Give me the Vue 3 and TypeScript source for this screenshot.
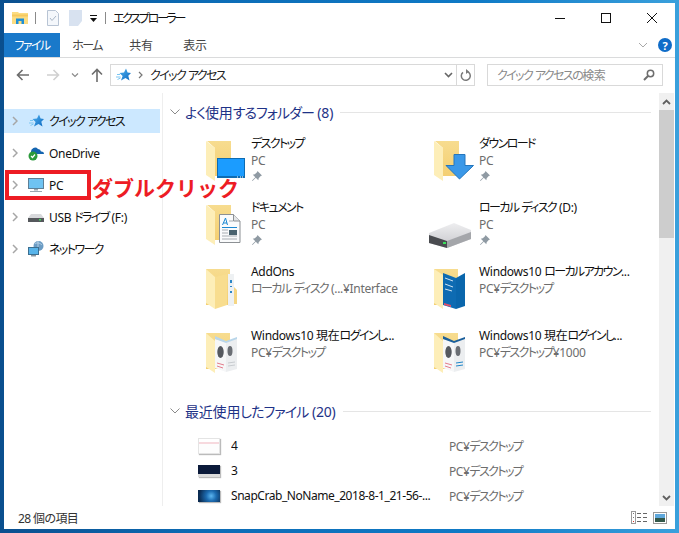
<script setup lang="ts">
import { h } from 'vue'
import type { FunctionalComponent } from 'vue'

type TileKind = 'desktop' | 'download' | 'docs' | 'drive' | 'addons' | 'blue' | 'paper' | 'paperblue'

interface Tile {
  name: string
  sub: string
  kind: TileKind
  pinned?: boolean
}

const tiles: Tile[] = [
  { name: 'デスクトップ', sub: 'PC', kind: 'desktop', pinned: true },
  { name: 'ダウンロード', sub: 'PC', kind: 'download', pinned: true },
  { name: 'ドキュメント', sub: 'PC', kind: 'docs', pinned: true },
  { name: 'ローカル ディスク (D:)', sub: 'PC', kind: 'drive', pinned: true },
  { name: 'AddOns', sub: 'ローカル ディスク (...¥Interface', kind: 'addons' },
  { name: 'Windows10 ローカルアカウン...', sub: 'PC¥デスクトップ', kind: 'blue' },
  { name: 'Windows10 現在ログインし...', sub: 'PC¥デスクトップ', kind: 'paper' },
  { name: 'Windows10 現在ログインし...', sub: 'PC¥デスクトップ¥1000', kind: 'paperblue' },
]

const recent = [
  { name: '4', kind: 'light' },
  { name: '3', kind: 'dark' },
  { name: 'SnapCrab_NoName_2018-8-1_21-56-...', kind: 'win' },
]

const tabs = ['ホーム', '共有', '表示']

// kana runs get tighter tracking than latin and kanji, like the Windows UI font
const KanaText: FunctionalComponent<{ text: string }> = (props) =>
  props.text
    .split(/([\u3040-\u30ff]+)/)
    .filter(Boolean)
    .map((part) => h('span', { class: /^[\u3040-\u30ff]/.test(part) ? 'kana' : undefined }, part))
KanaText.props = ['text']
</script>

<template>
  <div class="desktop">
    <svg class="defs" aria-hidden="true">
      <defs>
        <linearGradient id="fback" x1="0" y1="0" x2="0" y2="1">
          <stop offset="0" stop-color="#f7dc8f" />
          <stop offset="1" stop-color="#f4cf72" />
        </linearGradient>
        <linearGradient id="starfill" x1="0" y1="0" x2="1" y2="1">
          <stop offset="0" stop-color="#4fb2f0" />
          <stop offset="1" stop-color="#0c68c0" />
        </linearGradient>
        <linearGradient id="drive" x1="0" y1="0" x2="0" y2="1">
          <stop offset="0" stop-color="#eeeef0" />
          <stop offset="1" stop-color="#c6c7cb" />
        </linearGradient>
      </defs>
      <symbol id="star" viewBox="0 0 16 16">
        <path d="M11 1.500l1.600 4.100 3.400.4-2.700 2.800 1.200 4.700-4-2.500L6 13.500l1.600-4.500L4.500 6l4.500-.4z" fill="url(#starfill)" />
        <path d="M2 7.500h3M1 10h4.500M2.500 12.500l3-1.500" stroke="#7cc6f2" stroke-width="1" fill="none" />
      </symbol>
      <symbol id="pin" viewBox="0 0 12 12">
        <path d="M6.500 1l4.500 4.500-1.300.5-2 2.200-.4 2L4.800 7.700 1.500 11 1 10.500 4.300 7.200 1.800 4.700l2-.4L6 2.300z" fill="#8f9aa3" />
      </symbol>
      <symbol id="folder" viewBox="0 0 51 60">
        <path d="M7 6h24v35H15V13z" fill="url(#fback)" />
        <path d="M6 6l9 7v33l-9-6z" fill="#fdeeb8" />
      </symbol>
    </svg>

    <div class="window">
      <header class="titlebar">
        <svg class="app-icon" width="16" height="14" viewBox="0 0 16 14">
          <path d="M0 1h6l1 1h9v11H0z" fill="#fbdc82" />
          <path d="M0 3.500h16v2H0z" fill="#f5c95e" />
          <path d="M4 7.500h8V13H9.500v-3h-3v3H4z" fill="#1f8fd6" />
        </svg>
        <span class="qa-sep" />
        <svg class="qa-icon" width="12" height="16" viewBox="0 0 12 16">
          <path d="M.500.500h8l3 3v12H.500z" fill="#f4f7fb" stroke="#b8c4d4" />
          <path d="M3 8l2 2.500L9 6" fill="none" stroke="#a9b6c6" stroke-width="1" />
        </svg>
        <svg class="qa-icon" width="13" height="16" viewBox="0 0 13 16">
          <path d="M0 0h13v11l-4 5H0z" fill="#d8e2f0" />
        </svg>
        <svg class="qa-drop" width="7" height="7" viewBox="0 0 7 7">
          <path d="M0 0h7v1H0zM0 3h7L3.500 7z" fill="#111" />
        </svg>
        <span class="qa-sep second" />
        <span class="title">エクスプローラー</span>
        <div class="winbtns">
          <svg width="12" height="12" viewBox="0 0 12 12"><path d="M1 6.500h10" stroke="#111" /></svg>
          <svg width="12" height="12" viewBox="0 0 12 12"><rect x="1.500" y="1.500" width="9" height="9" fill="none" stroke="#111" /></svg>
          <svg width="12" height="12" viewBox="0 0 12 12"><path d="M1 1l10 10M11 1L1 11" stroke="#111" /></svg>
        </div>
      </header>

      <nav class="ribbon">
        <span class="tab active"><KanaText text="ファイル" /></span>
        <span v-for="tab in tabs" :key="tab" class="tab"><KanaText :text="tab" /></span>
        <svg class="ribbon-chev" width="10" height="6" viewBox="0 0 10 6">
          <path d="M1 1l4 4 4-4" fill="none" stroke="#a8a8a8" />
        </svg>
        <span class="help">?</span>
      </nav>

      <div class="addressrow">
        <svg class="nav-btn" width="14" height="12" viewBox="0 0 14 12">
          <path d="M13 6H2M6.500 1L1.500 6l5 5" fill="none" stroke="#6d6d6d" stroke-width="1.600" />
        </svg>
        <svg class="nav-btn fwd" width="14" height="12" viewBox="0 0 14 12">
          <path d="M1 6h11M7.500 1l5 5-5 5" fill="none" stroke="#d0d0d0" stroke-width="1.600" />
        </svg>
        <svg class="nav-btn drop" width="8" height="5" viewBox="0 0 8 5">
          <path d="M1 .5l3 3 3-3" fill="none" stroke="#8a8a8a" stroke-width="1.200" />
        </svg>
        <svg class="nav-btn up" width="12" height="14" viewBox="0 0 12 14">
          <path d="M6 14V2M1 6.500l5-5 5 5" fill="none" stroke="#6d6d6d" stroke-width="1.600" />
        </svg>
        <div class="addressbox">
          <svg class="addr-star" width="16" height="16"><use href="#star" /></svg>
          <svg class="addr-chev" width="5" height="8" viewBox="0 0 5 8">
            <path d="M1 1l3 3-3 3" fill="none" stroke="#777" stroke-width="1.200" />
          </svg>
          <span class="addr-text"><KanaText text="クイック アクセス" /></span>
          <svg class="addr-drop" width="9" height="6" viewBox="0 0 9 6">
            <path d="M1 1l3.500 3.500L8 1" fill="none" stroke="#666" stroke-width="1.600" />
          </svg>
          <span class="addr-refresh">
            <svg width="12" height="13" viewBox="0 0 12 13">
              <path d="M7 2.500A4.500 4.500 0 1 1 3 3.300" fill="none" stroke="#7a7a7a" stroke-width="1.500" />
              <path d="M6 0v5l3-2.500z" fill="#7a7a7a" />
            </svg>
          </span>
        </div>
        <div class="searchbox">
          <span><KanaText text="クイック アクセスの検索" /></span>
          <svg width="12" height="12" viewBox="0 0 12 12">
            <circle cx="7.500" cy="4.500" r="3.200" fill="none" stroke="#6d6d6d" stroke-width="1.500" />
            <path d="M5 7l-4 4" stroke="#6d6d6d" stroke-width="2" />
          </svg>
        </div>
      </div>

      <div class="body">
        <aside class="navpane">
          <div class="navrow selected">
            <svg class="navchev" width="6" height="10" viewBox="0 0 6 10"><path d="M1 1l4 4-4 4" fill="none" stroke="#a6a6a6" stroke-width="1.500" /></svg>
            <svg class="navicon" width="16" height="16"><use href="#star" /></svg>
            <span><KanaText text="クイック アクセス" /></span>
          </div>
          <div class="navrow">
            <svg class="navchev" width="6" height="10" viewBox="0 0 6 10"><path d="M1 1l4 4-4 4" fill="none" stroke="#a6a6a6" stroke-width="1.500" /></svg>
            <svg class="navicon" width="16" height="16" viewBox="0 0 16 16">
              <path d="M3 7a4 4 0 0 1 7-3 3 3 0 0 1 3 2.500 2.500 2.500 0 0 1 3 2.500H6z" fill="#1565b0" />
              <circle cx="5" cy="11" r="4.500" fill="#2c9a3c" />
              <path d="M3 11l1.500 1.500L7 9.500" fill="none" stroke="#fff" stroke-width="1.200" />
            </svg>
            <span>OneDrive</span>
          </div>
          <div class="navrow">
            <svg class="navchev" width="6" height="10" viewBox="0 0 6 10"><path d="M1 1l4 4-4 4" fill="none" stroke="#a6a6a6" stroke-width="1.500" /></svg>
            <svg class="navicon" width="16" height="16" viewBox="0 0 16 16">
              <rect x=".5" y="1.500" width="15" height="10" fill="#6fc3f2" stroke="#5d7f96" />
              <path d="M6 12h4v1.500H6zM2 14h12v1H2z" fill="#9aa7b0" />
            </svg>
            <span>PC</span>
          </div>
          <div class="navrow">
            <svg class="navchev" width="6" height="10" viewBox="0 0 6 10"><path d="M1 1l4 4-4 4" fill="none" stroke="#a6a6a6" stroke-width="1.500" /></svg>
            <svg class="navicon" width="16" height="16" viewBox="0 0 16 16">
              <path d="M3 5h10l3 4H0z" fill="#d8d9dc" />
              <path d="M0 9h16v4H0z" fill="#55585c" />
              <rect x="11" y="10" width="2" height="1.500" fill="#3fdc5a" />
            </svg>
            <span><KanaText text="USB ドライブ (F:)" /></span>
          </div>
          <div class="navrow">
            <svg class="navchev" width="6" height="10" viewBox="0 0 6 10"><path d="M1 1l4 4-4 4" fill="none" stroke="#a6a6a6" stroke-width="1.500" /></svg>
            <svg class="navicon" width="16" height="16" viewBox="0 0 16 16">
              <circle cx="10.500" cy="5" r="5" fill="#6b9cc4" />
              <path d="M7 3c2-2 5-1 7 1M10 0v10" stroke="#c7dcec" stroke-width=".8" fill="none" />
              <rect x=".5" y="6.500" width="10" height="7" fill="#58b4ea" stroke="#3c6f90" />
              <path d="M3 14h5v1.500H3z" fill="#8a98a3" />
            </svg>
            <span><KanaText text="ネットワーク" /></span>
          </div>
        </aside>

        <main class="content">
          <h2 class="group">
            <svg width="10" height="6" viewBox="0 0 10 6"><path d="M.5.500L5 5 9.500.5" fill="none" stroke="#8a8a8a" /></svg>
            <span><KanaText text="よく使用するフォルダー (8)" /></span>
            <i />
          </h2>

          <div class="tiles">
            <div v-for="tile in tiles" :key="tile.name + tile.sub" class="tile">
              <svg class="tile-icon" width="51" height="60" viewBox="0 0 51 60">
                <template v-if="tile.kind === 'drive'">
                  <path d="M1 34l25-10 17 7v9l-24 9-18-5z" fill="url(#drive)" />
                  <path d="M1 36l18 6v7l-18-5z" fill="#4a4c50" />
                  <path d="M19 42l24-9v7l-24 9z" fill="#a4a6aa" />
                  <rect x="15" y="43" width="3" height="2" fill="#3be05c" />
                </template>
                <template v-else-if="tile.kind === 'addons'">
                  <path d="M6 6h24v36H6z" fill="url(#fback)" />
                  <path d="M28 11h6v32h-6z" fill="#eef1f3" />
                  <path d="M30 17h2v3h-2zM30 23h2v1h-2zM30 28h2v2h-2z" fill="#2d87c7" />
                  <path d="M34 24l3 3v14h-3z" fill="#f5d684" />
                  <path d="M15 14l12-3v31l-12 4z" fill="#f8dd8f" />
                  <path d="M6 6l9 8v32l-9-6z" fill="#fdeeb8" />
                </template>
                <template v-else-if="tile.kind === 'blue'">
                  <path d="M6 6h24v36H6z" fill="url(#fback)" />
                  <path d="M6 6l9 6v34l-9-6z" fill="#fdeeb8" />
                  <path d="M15 10l13 5v31l-13-4z" fill="#0e6bb2" />
                  <path d="M28 15l9-5v33l-9 3z" fill="#0a66ac" />
                  <path d="M17 15l8 3M17 21l8 3M17 26l7 2" stroke="#cfe3f2" />
                  <path d="M16 40l7 2v2l-7-2z" fill="#e0506a" />
                </template>
                <template v-else-if="tile.kind === 'paper' || tile.kind === 'paperblue'">
                  <path d="M6 6h24v36H6z" fill="url(#fback)" />
                  <path d="M6 6l9 8v32l-9-6z" fill="#fdeeb8" />
                  <path d="M15 12l11 3v30l-11-4z" fill="#f6f7f8" />
                  <path d="M26 15l11-4v31l-11 3z" fill="#eceef0" />
                  <path d="M15 9l11 5 11-4v2l-11 4-11-4z" :fill="tile.kind === 'paper' ? '#b9d6ea' : '#1b5f9b'" />
                  <ellipse cx="20.500" cy="25" rx="3.200" ry="6" fill="#55595f" />
                  <ellipse cx="30" cy="24" rx="2.500" ry="5" fill="#6a6e74" />
                  <path d="M17 36l7 2M17 39l6 2" stroke="#e47b8b" />
                  <path d="M28 36l7-1M28 39l7-1" :stroke="tile.kind === 'paper' ? '#c8ccd0' : '#1f86c9'" />
                </template>
                <template v-else>
                  <use href="#folder" width="51" height="60" />
                  <template v-if="tile.kind === 'desktop'">
                    <rect x="17.500" y="23.500" width="27" height="19" fill="#1b9cff" stroke="#0d6cb3" />
                    <path d="M18 41h26v2H18z" fill="#0d6cb3" />
                    <path d="M37 41.500h1v1h-1zM40 41.500h1v1h-1zM42 41.500h1v1h-1z" fill="#fff" />
                  </template>
                  <path v-else-if="tile.kind === 'download'" d="M26 19.500h11v11h8.500L31.500 44 18 30.500h8z" fill="#3a98e8" stroke="#2476bd" />
                  <template v-else-if="tile.kind === 'docs'">
                    <path d="M19.500 15.500h14l6.500 6.500v21.500H19.500z" fill="#fafbfc" stroke="#8c9094" />
                    <path d="M33.500 15.500v6.500h6.500" fill="#e4e6e8" stroke="#8c9094" />
                    <path d="M22.500 26l3-7 2 7M23.500 24h3.500" fill="none" stroke="#1b87d1" />
                    <path d="M29 22h4" stroke="#a8adb2" />
                    <path d="M22 28h15v1H22z" fill="#1b87d1" />
                    <path d="M22 31h6M22 34h6M22 37h15M22 40h15" stroke="#a8adb2" />
                    <rect x="29" y="31" width="8" height="5" fill="#4b6470" />
                  </template>
                </template>
              </svg>
              <div class="tile-text">
                <div class="tile-name"><KanaText :text="tile.name" /></div>
                <div class="tile-sub"><KanaText :text="tile.sub" /></div>
                <svg v-if="tile.pinned" class="tile-pin" width="12" height="12"><use href="#pin" /></svg>
              </div>
            </div>
          </div>

          <h2 class="group second">
            <svg width="10" height="6" viewBox="0 0 10 6"><path d="M.5.500L5 5 9.500.5" fill="none" stroke="#8a8a8a" /></svg>
            <span><KanaText text="最近使用したファイル (20)" /></span>
            <i />
          </h2>

          <div class="recent">
            <div v-for="file in recent" :key="file.name" class="recent-row">
              <span class="thumb" :class="file.kind" />
              <span class="recent-name">{{ file.name }}</span>
              <span class="recent-path"><KanaText text="PC¥デスクトップ" /></span>
            </div>
          </div>
        </main>

        <div class="scrollbar">
          <span class="sb-btn">
            <svg width="9" height="6" viewBox="0 0 9 6"><path d="M1 5l3.500-3.500L8 5" fill="none" stroke="#606060" stroke-width="1.800" /></svg>
          </span>
          <span class="sb-thumb" />
          <span class="sb-track" />
          <span class="sb-btn">
            <svg width="9" height="6" viewBox="0 0 9 6"><path d="M1 1l3.500 3.500L8 1" fill="none" stroke="#606060" stroke-width="1.800" /></svg>
          </span>
        </div>
      </div>

      <footer class="statusbar">
        <span>28 個の項目</span>
        <div class="viewbtns">
          <svg width="17" height="13" viewBox="0 0 17 13">
            <rect x=".5" y=".5" width="4" height="12" fill="#fff" stroke="#9a9a9a" />
            <path d="M2 2h1v1H2zM2 6h1v1H2z" fill="#777" />
            <path d="M2 10h1v1H2z" fill="#d9342b" />
            <path d="M6 2.500h4M12 2.500h4M6 6.500h4M12 6.500h4M6 10.500h4M12 10.500h4" stroke="#666" />
          </svg>
          <svg width="14" height="12" viewBox="0 0 14 12">
            <rect x=".5" y=".5" width="13" height="11" fill="#fff" stroke="#9a9a9a" />
            <rect x="2" y="2" width="10" height="4" fill="#5fa8dc" />
            <rect x="2" y="6" width="10" height="4" fill="#33584a" />
          </svg>
        </div>
      </footer>
    </div>

    <!-- annotation over the screenshot -->
    <div class="mark-box" />
    <div class="mark-text">ダブルクリック</div>
  </div>
</template>

<style>
html,
body {
  margin: 0;
}

.kana {
  letter-spacing: var(--kana-track, -1.6px);
}
</style>

<style scoped>
.desktop {
  position: relative;
  box-sizing: border-box;
  width: 679px;
  height: 533px;
  padding: 3px 4px 4px;
  overflow: hidden;
  background: linear-gradient(90deg, #0a4f8e 0, #0c6cb6 30%, #0f7ac6 70%, #3aa0dc 100%);
  font-family: "Noto Sans", "Noto Sans CJK JP", sans-serif;
  font-size: 12px;
  font-feature-settings: "palt";
  color: #111;
}

.defs {
  position: absolute;
  width: 0;
  height: 0;
}

.window {
  display: flex;
  flex-direction: column;
  height: 100%;
  background: #fff;
}

.titlebar {
  display: flex;
  align-items: center;
  flex: none;
  height: 30px;
  padding-left: 8px;
}

.app-icon {
  margin-right: 7px;
}

.qa-sep {
  width: 1px;
  height: 12px;
  margin-right: 11px;
  background: #8a8a8a;
}

.qa-sep.second {
  margin: 0 7px 0 8px;
}

.qa-icon {
  margin-right: 10px;
}

.qa-drop {
  margin-left: -2px;
}

.title {
  letter-spacing: -2.300px;
}

.winbtns {
  display: flex;
  gap: 34px;
  margin-left: auto;
  margin-right: 17px;
}

.ribbon {
  display: flex;
  align-items: center;
  flex: none;
  height: 24px;
  border-bottom: 1px solid #dadbdc;
}

.tab {
  display: flex;
  align-items: center;
  justify-content: center;
  width: 54px;
  height: 100%;
  color: #444;
  letter-spacing: -0.3px;
}

.tab.active {
  width: 56px;
  background: #1979ca;
  color: #fff;
}

.ribbon-chev {
  margin-left: auto;
  margin-right: 10px;
}

.help {
  display: flex;
  align-items: center;
  justify-content: center;
  width: 14px;
  height: 14px;
  margin-right: 3px;
  border-radius: 50%;
  background: #0f6cc8;
  color: #fff;
  font-size: 11px;
  font-weight: 700;
}

.addressrow {
  display: flex;
  align-items: center;
  flex: none;
  height: 35px;
  padding-bottom: 1px;
  box-sizing: border-box;
}

.nav-btn {
  flex: none;
  margin-left: 12px;
}

.nav-btn.fwd {
  margin-left: 16px;
}

.nav-btn.drop {
  margin-left: 11px;
}

.addressbox {
  display: flex;
  align-items: center;
  flex: none;
  box-sizing: border-box;
  width: 365px;
  height: 22px;
  margin-left: 7px;
  border: 1px solid #d9d9d9;
}

.addr-star {
  margin-left: 4px;
}

.addr-chev {
  margin-left: 7px;
}

.addr-text {
  margin-left: 7px;
  letter-spacing: -0.3px;
  color: #222;
}

.addr-drop {
  margin-left: auto;
  margin-right: 3px;
}

.addr-refresh {
  display: flex;
  align-items: center;
  justify-content: center;
  width: 17px;
  height: 100%;
  border-left: 1px solid #d9d9d9;
}

.searchbox {
  display: flex;
  align-items: center;
  justify-content: space-between;
  flex: none;
  box-sizing: border-box;
  width: 176px;
  height: 22px;
  margin-left: 12px;
  padding: 0 7px 0 9px;
  border: 1px solid #d9d9d9;
  color: #8a8a8a;
  letter-spacing: -0.3px;
}

.body {
  display: flex;
  flex: 1;
  min-height: 0;
}

.navpane {
  display: flex;
  flex-direction: column;
  flex: none;
  gap: 8px;
  box-sizing: border-box;
  width: 159px;
  padding: 16px 2px 0 0;
  border-right: 1px solid #eeeeee;
}

.navrow {
  display: flex;
  align-items: center;
  height: 24px;
  letter-spacing: -0.3px;
}

.navrow.selected {
  background: #cce8ff;
}

.navchev {
  margin-left: 8px;
}

.navicon {
  margin-left: 10px;
  margin-right: 5px;
}

.content {
  flex: 1;
  min-width: 0;
  overflow: hidden;
  padding: 10px 8px 0 7px;
}

.group {
  --kana-track: -0.9px;
  display: flex;
  align-items: center;
  height: 18px;
  margin: 0;
  font-size: 14px;
  font-weight: 400;
  letter-spacing: -0.2px;
  color: #1e3287;
}

.group svg {
  flex: none;
  margin-right: 5px;
}

.group i {
  flex: 1;
  height: 1px;
  margin-left: 7px;
  background: #e5e5e5;
}

.group.second {
  margin-top: 11px;
}

.tiles {
  display: grid;
  grid-template-columns: 228px 228px;
  grid-auto-rows: 64px;
  margin: 14px 0 0 30px;
  width: 456px;
}

.tile {
  display: flex;
  min-width: 0;
}

.tile-icon {
  flex: none;
}

.tile-text {
  min-width: 0;
  padding-top: 1px;
  white-space: nowrap;
  line-height: 16px;
  letter-spacing: -0.3px;
}

.tile-sub {
  margin-top: 1px;
  color: #6d6d6d;
}

.tile-pin {
  display: block;
  margin-top: 1px;
}

.recent {
  margin: 13px 0 0 28px;
}

.recent-row {
  display: flex;
  align-items: center;
  height: 25px;
  white-space: nowrap;
  letter-spacing: -0.45px;
}

.thumb {
  flex: none;
  box-sizing: border-box;
  width: 22px;
  height: 16px;
  margin-right: 11px;
  box-shadow: 1px 1px 1px #bbb;
}

.thumb.light {
  border: 1px solid #e4e4e4;
  background: linear-gradient(180deg, #fff 0 20%, #f7d9de 20% 35%, #fdfdfd 35%);
}

.thumb.dark {
  height: 12px;
  background: linear-gradient(180deg, #0b1a3a 0 75%, #dcdcdc 75%);
}

.thumb.win {
  height: 12px;
  background: radial-gradient(circle at 60% 50%, #5cb6f0 0, #1c6bb0 35%, #0a2a50 85%);
}

.recent-name {
  width: 218px;
  overflow: hidden;
}

.recent-path {
  color: #6d6d6d;
}

.scrollbar {
  display: flex;
  flex-direction: column;
  flex: none;
  width: 15px;
  margin-right: 1px;
  background: #f0f0f0;
}

.sb-btn {
  display: flex;
  align-items: center;
  justify-content: center;
  flex: none;
  height: 17px;
}

.sb-thumb {
  flex: none;
  height: 128px;
  background: #cdcdcd;
}

.sb-track {
  flex: 1;
}

.statusbar {
  display: flex;
  align-items: center;
  justify-content: space-between;
  flex: none;
  height: 23px;
  padding: 0 8px 0 14px;
  letter-spacing: -0.6px;
  color: #333;
}

.viewbtns {
  display: flex;
  align-items: center;
  gap: 5px;
}

.mark-box {
  position: absolute;
  left: 5px;
  top: 170px;
  box-sizing: border-box;
  width: 86px;
  height: 30px;
  border: 4px solid #ed1c24;
}

.mark-text {
  position: absolute;
  left: 92px;
  top: 174px;
  font-size: 21px;
  font-weight: 700;
  font-feature-settings: normal;
  line-height: 28px;
  letter-spacing: 0;
  color: #ed1c24;
}
</style>
